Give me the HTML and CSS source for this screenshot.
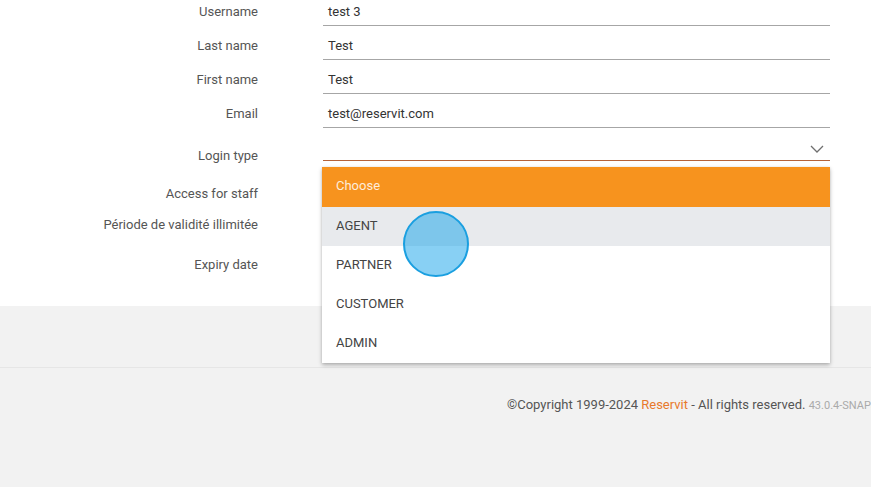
FILE: index.html
```html
<!DOCTYPE html>
<html>
<head>
<meta charset="utf-8">
<link rel="stylesheet" href="styles.css">
</head>
<body>
<div class="page">
  <section class="main">
    <div class="form">
      <div class="row">
        <div class="label">Username</div>
        <div class="field">test 3</div>
      </div>
      <div class="row">
        <div class="label">Last name</div>
        <div class="field">Test</div>
      </div>
      <div class="row">
        <div class="label">First name</div>
        <div class="field">Test</div>
      </div>
      <div class="row">
        <div class="label">Email</div>
        <div class="field">test@reservit.com</div>
      </div>
      <div class="row row-select">
        <div class="label">Login type</div>
        <div class="field select">
          <svg class="chev" width="14" height="8" viewBox="0 0 14 8"><path d="M1 1 L7 7 L13 1" fill="none" stroke="#6f6f6f" stroke-width="1.3"/></svg>
          <ul class="menu">
            <li class="opt choose">Choose</li>
            <li class="opt hover">AGENT</li>
            <li class="opt">PARTNER</li>
            <li class="opt">CUSTOMER</li>
            <li class="opt">ADMIN</li>
          </ul>
        </div>
      </div>
      <div class="row row-plain r-staff">
        <div class="label">Access for staff</div>
        <div></div>
      </div>
      <div class="row row-plain r-valid">
        <div class="label">Période de validité illimitée</div>
        <div></div>
      </div>
      <div class="row row-plain r-expiry">
        <div class="label">Expiry date</div>
        <div></div>
      </div>
    </div>
  </section>
  <section class="band"></section>
  <footer class="footer">
    <span>©Copyright 1999-2024 <a class="brand">Reservit</a> - All rights reserved.</span>
    <span class="version">43.0.4-SNAPSHOT</span>
  </footer>
</div>
<div class="touch"></div>
</body>
</html>
```
FILE: styles.css
```css
html, body {
  margin: 0;
  padding: 0;
  width: 871px;
  height: 487px;
  overflow: hidden;
  background: #f2f2f2;
  font-family: Roboto, "Liberation Sans", sans-serif;
}

.page {
  display: flex;
  flex-direction: column;
}

.main {
  background: #ffffff;
  height: 306px;
}

.form {
  display: flex;
  flex-direction: column;
}

.row {
  display: grid;
  grid-template-columns: 258px 507px;
  column-gap: 65px;
  margin-bottom: 8px;
  align-items: start;
}

.label {
  text-align: right;
  font-size: 13px;
  color: #555;
  line-height: 23px;
}

.field {
  height: 25px;
  line-height: 23px;
  border-bottom: 1px solid #a6a6a6;
  font-size: 13px;
  color: #333;
  padding-left: 5px;
  position: relative;
}

.row-select {
  margin-top: -1px;
  align-items: end;
}

.row-select .label {
  line-height: 11px;
}

.select {
  border-bottom-color: #b5633a;
}

.chev {
  position: absolute;
  right: 6px;
  top: 10px;
}

.menu {
  position: absolute;
  left: -1px;
  top: 32px;
  width: 508px;
  margin: 0;
  padding: 0;
  list-style: none;
  background: #fff;
  box-shadow: 0 2px 4px rgba(0,0,0,0.28), 0 0 2px rgba(0,0,0,0.08);
  z-index: 5;
}

.opt {
  height: 39px;
  line-height: 37px;
  padding-left: 14px;
  font-size: 13px;
  color: #444;
}

.opt.choose {
  height: 40px;
  line-height: 38px;
  background: #f7931e;
  color: rgba(255,255,255,0.85);
}

.opt.hover {
  background: #e8eaed;
}

.row-plain {
  margin-bottom: 0;
}

.r-staff { margin-top: 13px; }
.r-valid { margin-top: 8px; }
.r-expiry { margin-top: 17px; }

.band {
  height: 61px;
  background: #f2f2f2;
  border-bottom: 1px solid #e6e6e6;
}

.footer {
  padding-top: 28px;
  padding-left: 507px;
  white-space: nowrap;
  font-size: 13px;
  color: #555;
  line-height: 18px;
}

.brand {
  color: #e8792c;
}

.version {
  font-size: 11px;
  color: #aaa;
}

.touch {
  position: absolute;
  left: 403px;
  top: 211px;
  width: 62px;
  height: 62px;
  border: 2px solid #1a9fe0;
  border-radius: 50%;
  background: rgba(26,164,234,0.52);
  z-index: 10;
}
```
